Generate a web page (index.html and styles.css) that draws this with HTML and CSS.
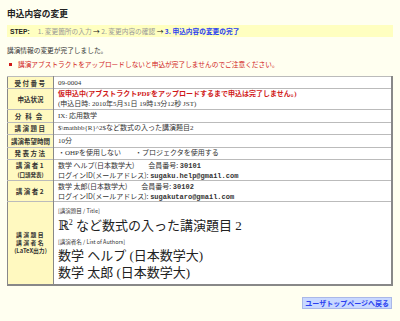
FILE: index.html
```html
<!DOCTYPE html>
<html lang="ja">
<head>
	<meta charset="utf-8">
	<title>申込内容の変更</title>
	<link rel="stylesheet" href="styles.css">
</head>
<body>
	<h1>申込内容の変更</h1>
	<div class="step">
		<b>STEP:</b><span class="done">1. 変更箇所の入力</span> → <span class="done">2. 変更内容の確認</span> → <span class="now">3. 申込内容の変更の完了</span>
	</div>
	<p class="msg">講演情報の変更が完了しました。</p>
	<p class="warn">講演アブストラクトをアップロードしないと申込が完了しませんのでご注意ください。</p>

	<table class="info">
		<colgroup><col class="head"><col></colgroup>
		<tr><th class="wide">受付番号</th><td>09-0004</td></tr>
		<tr class="two">
			<th>申込状況</th>
			<td>
				<div class="ln red">仮申込中(アブストラクトPDFをアップロードするまで申込は完了しません。)</div>
				<div class="ln">(申込日時: 2010年5月31日 19時13分12秒 JST)</div>
			</td>
		</tr>
		<tr><th class="wider">分科会</th><td>IX: 応用数学</td></tr>
		<tr><th class="wide">講演題目</th><td>$\mathbb{R}^2$など数式の入った講演題目2</td></tr>
		<tr><th>講演希望時間</th><td>10分</td></tr>
		<tr><th class="wide">発表方法</th><td>・OHPを使用しない　　・プロジェクタを使用する</td></tr>
		<tr class="two">
			<th><div class="ln wide">講演者1</div><div class="ln note">(口頭発表)</div></th>
			<td class="goth">
				<div class="ln">数学 ヘルプ(日本数学大)　　会員番号: <span class="mono">30101</span></div>
				<div class="ln">ログインID(メールアドレス): <span class="mono">sugaku.help@gmail.com</span></div>
			</td>
		</tr>
		<tr class="two">
			<th class="wide">講演者2</th>
			<td class="goth">
				<div class="ln">数学 太郎(日本数学大)　　会員番号: <span class="mono">30102</span></div>
				<div class="ln">ログインID(メールアドレス): <span class="mono">sugakutaro@gmail.com</span></div>
			</td>
		</tr>
		<tr>
			<th class="latexhead">
				<div class="wide">講演題目</div>
				<div class="wide">講演者名</div>
				<div>(LaTeX出力)</div>
			</th>
			<td class="latex">
				<div class="label">[講演題目 / Title]</div>
				<div class="big title">ℝ<sup>2</sup> など数式の入った講演題目 2</div>
				<div class="label">[講演者名 / List of Authors]</div>
				<div class="big">数学 ヘルプ (日本数学大)</div>
				<div class="big">数学 太郎 (日本数学大)</div>
			</td>
		</tr>
	</table>

	<div class="back"><a href="#">ユーザトップページへ戻る</a></div>
</body>
</html>
```

FILE: styles.css
```css
body {
	margin: 0;
	padding: 8px 7px;
	background-color: #fffff0;
	font-family: "Noto Sans CJK JP", sans-serif;
	font-size: 6.7px;
	color: #333333;
}

h1 {
	margin: 0 0 6px;
	font-size: 8.7px;
	line-height: 11px;
	color: #222222;
}

.step {
	height: 12px;
	line-height: 12px;
	padding-left: 3px;
	margin-bottom: 8px;
	background-color: #ffffc0;
	color: #222222;
}
.step b {
	font-family: "Liberation Sans", sans-serif;
	margin-right: 8px;
}
.step .done {
	color: #999999;
}
.step .now {
	color: #2a3ff0;
	font-weight: bold;
}

.msg {
	margin: 0 0 4px;
	line-height: 10px;
}
.warn {
	margin: 0 0 7px;
	padding-left: 11px;
	line-height: 10px;
	color: #d01818;
}
.warn::before {
	content: "";
	display: inline-block;
	width: 3px;
	height: 3px;
	margin: 0 6px 1px -9px;
	vertical-align: middle;
	background-color: #d01818;
}

.info {
	width: 100%;
	table-layout: fixed;
	border-collapse: collapse;
	background-color: #ffffff;
	border: 1px solid #888888;
	border-right-width: 2px;
	border-bottom-width: 2px;
}
.info col.head {
	width: 46px;
}
.info th, .info td {
	border-top: 1px solid #bbbbbb;
	padding: 0.7px 3px;
	line-height: 10px;
	font-size: 7px;
	vertical-align: middle;
}
.info th {
	padding: 0.7px 0;
	background-color: #fff9c0;
	border-right: 1px solid #888888;
	text-align: center;
	font-size: 6.5px;
	color: #333333;
}
.info td {
	padding-left: 4px;
	text-align: left;
	font-family: "Liberation Serif", "Noto Sans CJK JP", serif;
	color: #333333;
}
.info tr.two td {
	padding: 0 4px;
}
.info tr.two th {
	padding: 0;
}
.info .ln {
	height: 10px;
	line-height: 10px;
	white-space: nowrap;
}
.info .wide {
	letter-spacing: 1.5px;
}
.info .wider {
	letter-spacing: 4px;
}
.info .note {
	font-size: 5.5px;
}
.info .red {
	color: #d01818;
	font-weight: bold;
}
.info .goth {
	font-family: "Noto Sans CJK JP", sans-serif;
}
.info .mono {
	font-family: "Liberation Mono", monospace;
	font-weight: bold;
	line-height: 0;
}

.info .latexhead {
	font-size: 5.8px;
	line-height: 8px;
}
.info td.latex {
	padding: 4px 4px 3px;
}
.latex .label {
	font-size: 5.5px;
	line-height: 10px;
	font-family: "Noto Sans CJK JP", sans-serif;
}
.latex .big {
	font-size: 13px;
	line-height: 17px;
	font-family: "Liberation Serif", "DejaVu Serif", "Noto Sans CJK JP", serif;
	color: #222222;
}
.latex .title {
	line-height: 19px;
	margin-bottom: 2px;
}
.latex sup {
	position: relative;
	top: -5px;
	vertical-align: baseline;
	font-size: 8px;
	line-height: 0;
}

.back {
	margin-top: 11px;
	text-align: right;
	padding-right: 1px;
}
.back a {
	display: inline-block;
	padding: 0 2px;
	line-height: 10px;
	font-size: 7px;
	font-weight: bold;
	color: #2a3ff0;
	text-decoration: none;
	background-color: #c8d8ff;
	border: 1px solid #aab8e8;
}
```
